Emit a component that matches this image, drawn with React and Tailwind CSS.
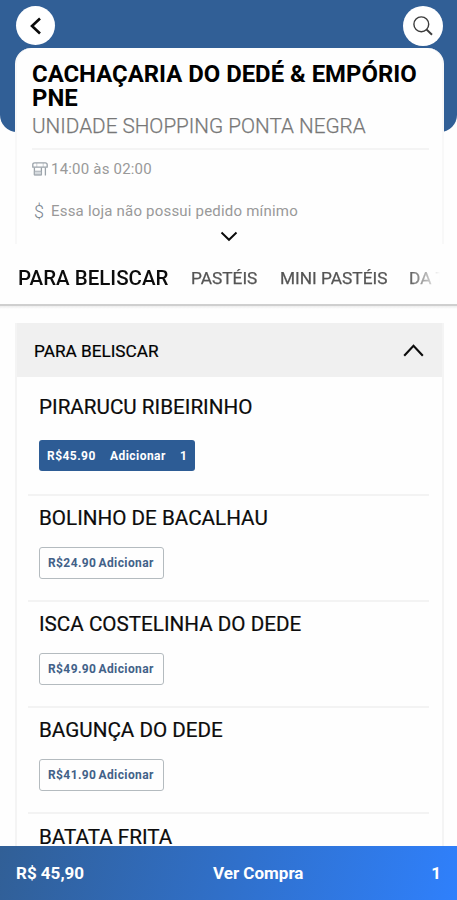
import React, { useState } from "react";
import clsx from "clsx";

const categories = ["PARA BELISCAR", "PASTÉIS", "MINI PASTÉIS", "DA TERRA"];

const products = [
  { name: "PIRARUCU RIBEIRINHO", price: "R$45.90", qty: 1 },
  { name: "BOLINHO DE BACALHAU", price: "R$24.90", qty: 0 },
  { name: "ISCA COSTELINHA DO DEDE", price: "R$49.90", qty: 0 },
  { name: "BAGUNÇA DO DEDE", price: "R$41.90", qty: 0 },
  { name: "BATATA FRITA", price: "R$29.90", qty: 0 },
];

function StoreIcon() {
  return (
    <svg width="16" height="14" viewBox="0 0 16 14" fill="none" stroke="#9aa2a9" strokeWidth="1.3" strokeLinejoin="round">
      <path d="M2.8 0.8h10.4q2 0 2 2v2.4H.8V2.8q0-2 2-2z" />
      <path d="M4.8 1v4M11.2 1v4" strokeWidth="0.5" />
      <path d="M2.4 5.5v7.3h7V5.5" />
      <path d="M2.4 9.2h7v3.6h-7z" fill="#d5dade" strokeWidth="0.8" />
      <path d="M13.4 5.5v8" />
    </svg>
  );
}

function ProductRow({ product, first }) {
  return (
    <li className={clsx("border-b-2 border-[#f3f3f3] pl-[11.5px]", first ? "h-[118.5px] pt-[18px]" : "h-[106.2px] pt-[10.5px]")}>
      <h3 className="text-[20.65px] leading-6 whitespace-nowrap text-[#0c0c0c] [-webkit-text-stroke:0.2px_#0c0c0c]">{product.name}</h3>
      {product.qty > 0 ? (
        <button className="mt-[21px] flex h-[31px] w-[156px] items-center rounded-[3px] bg-[#2d5c95] pl-2 text-[12px] font-bold tracking-[0.45px] text-white">
          <span className="w-[63px] text-left">{product.price}</span>
          <span className="w-[70px] text-left">Adicionar</span>
          <span>{product.qty}</span>
        </button>
      ) : (
        <button className="mt-[17px] flex h-8 w-[125px] items-center rounded-[3px] border border-[#b4bbbf] pl-2 text-[12px] font-bold tracking-[0.4px] text-[#426188]">
          <span className="w-[50.5px] text-left">{product.price}</span>
          <span>Adicionar</span>
        </button>
      )}
    </li>
  );
}

export default function App() {
  const [open, setOpen] = useState(true);
  const [active, setActive] = useState(0);

  return (
    <div className="flex h-[900px] w-[457px] flex-col overflow-hidden bg-[#fefefe] font-[Roboto,sans-serif] text-black">
      <header className="flex h-[132px] shrink-0 justify-between rounded-b-[17px] bg-[#315f96] pt-1.5 pr-[14px] pl-4">
        <button aria-label="Voltar" className="flex size-[39px] items-center justify-center rounded-full bg-white">
          <svg width="12" height="18" viewBox="0 0 12 18" fill="none" stroke="#0a0a0a" strokeWidth="2.6">
            <path d="M10 1.5 2 9l8 7.5" />
          </svg>
        </button>
        <button aria-label="Buscar" className="flex size-10 items-center justify-center rounded-full bg-white">
          <svg width="20" height="20" viewBox="0 0 20 20" fill="none" stroke="#3c3c3c" strokeWidth="1.4">
            <circle cx="8.3" cy="8.3" r="7.4" />
            <path d="m13.4 13.4 5.6 5.4" strokeWidth="2" />
          </svg>
        </button>
      </header>

      <section className="mr-[13px] ml-[15px] -mt-[84px] flex h-[196px] shrink-0 flex-col rounded-t-[16px] border-x-2 border-[#f8f8f8] bg-[#fefefe] pt-[14px] pr-[13px] pl-[15px]">
        <h1 className="text-[23.9px] leading-6 font-bold whitespace-nowrap">
          CACHAÇARIA DO DEDÉ & EMPÓRIO
          <br />
          PNE
        </h1>
        <p className="mt-[4px] text-[20.7px] leading-6 font-light whitespace-nowrap text-[#777] [-webkit-text-stroke:0.25px_#777]">UNIDADE SHOPPING PONTA NEGRA</p>
        <div className="mt-[10px] border-t-2 border-[#f4f4f4]" />
        <div className="mt-[9px] flex h-5 items-center gap-[3px] text-[15px] tracking-[0.2px] text-[#999]">
          <StoreIcon />
          <span>14:00 às 02:00</span>
        </div>
        <div className="mt-[22px] flex h-5 items-center text-[15px] tracking-[0.2px] text-[#999]">
          <span className="w-[16px] pl-[2px] text-[18px] font-light text-[#7b8590]">$</span>
          <span className="ml-[3px]">Essa loja não possui pedido mínimo</span>
        </div>
        <svg className="mt-[10px] mr-[4px] self-center" width="18" height="11" viewBox="0 0 18 11" fill="none" stroke="#0a0a0a" strokeWidth="1.9">
          <path d="m1.5 1.5 7.5 7.3 7.5-7.3" />
        </svg>
      </section>

      <nav className="h-[62px] shrink-0 border-b-2 border-[#cfcfcf] bg-[#fefefe] pl-[18px]">
        <div className="flex h-full w-[422px] items-center overflow-hidden pt-[9px] whitespace-nowrap mask-[linear-gradient(to_right,black_390px,transparent_422px)]">
          {categories.map((c, i) => (
            <button
              key={c}
              onClick={() => setActive(i)}
              className={clsx(
                "shrink-0 text-left",
                i === active ? "text-[20.5px] font-medium text-[#0c0c0c]" : "text-[17.3px] text-[#555] [-webkit-text-stroke:0.25px_#555]",
                ["w-[173px]", "w-[89px]", "w-[129px]", "w-[90px]"][i]
              )}
            >
              {c}
            </button>
          ))}
        </div>
      </nav>
      <div className="h-[3px] shrink-0 bg-linear-to-b from-[#ededed] to-[#fefefe]" />

      <main className="mr-[13px] ml-[15px] mt-[14px] min-h-0 flex-1 overflow-hidden border-x-2 border-[#f4f4f4]">
        <button onClick={() => setOpen(!open)} className="flex h-[54px] w-full items-center justify-between bg-[#f0f0f0] pr-[18px] pl-[17px]">
          <span className="pt-[3px] text-[17.2px] [-webkit-text-stroke:0.2px_#000]">PARA BELISCAR</span>
          <svg width="21" height="13" viewBox="0 0 21 13" fill="none" stroke="#0c0c0c" strokeWidth="2.1" className={open ? "" : "rotate-180"}>
            <path d="M1.2 11.7 10.5 1.8l9.3 9.9" />
          </svg>
        </button>
        {open && (
          <ul className="mr-[13px] ml-[10.5px]">
            {products.map((p, i) => (
              <ProductRow key={p.name} product={p} first={i === 0} />
            ))}
          </ul>
        )}
      </main>

      <footer className="flex h-[54px] shrink-0 items-center bg-[linear-gradient(105deg,#315f96,#2f80fc)] px-4 pt-[2px] text-[17px] font-bold text-white">
        <span className="w-[197px]">R$ 45,90</span>
        <span className="flex-1 whitespace-nowrap">Ver Compra</span>
        <span>1</span>
      </footer>
    </div>
  );
}
